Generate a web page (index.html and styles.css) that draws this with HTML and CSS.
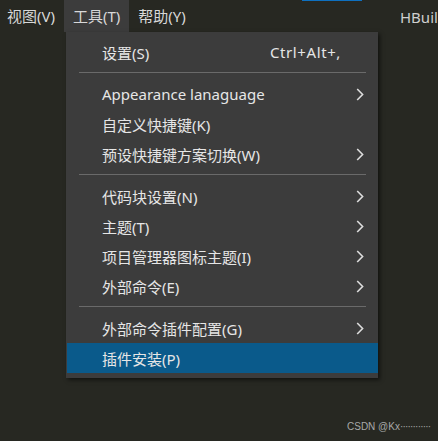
FILE: index.html
```html
<!DOCTYPE html>
<html lang="zh">
<head>
<meta charset="utf-8">
<link rel="stylesheet" href="styles.css">
</head>
<body>
<div class="screen">
  <div class="tabline"></div>
  <div class="menubar">
    <span class="mb-item">视图(V)</span>
    <span class="mb-item active">工具(T)</span>
    <span class="mb-item">帮助(Y)</span>
    <span class="title">HBuil</span>
  </div>
  <div class="menu">
    <div class="row"><span class="label">设置(S)</span><span class="key">Ctrl+Alt+,</span></div>
    <div class="sep"></div>
    <div class="row"><span class="label">Appearance lanaguage</span><svg class="arrow" viewBox="0 0 8 13"><path d="M1.2 1 L6.6 6.5 L1.2 12" /></svg></div>
    <div class="row"><span class="label">自定义快捷键(K)</span></div>
    <div class="row"><span class="label">预设快捷键方案切换(W)</span><svg class="arrow" viewBox="0 0 8 13"><path d="M1.2 1 L6.6 6.5 L1.2 12" /></svg></div>
    <div class="sep"></div>
    <div class="row"><span class="label">代码块设置(N)</span><svg class="arrow" viewBox="0 0 8 13"><path d="M1.2 1 L6.6 6.5 L1.2 12" /></svg></div>
    <div class="row"><span class="label">主题(T)</span><svg class="arrow" viewBox="0 0 8 13"><path d="M1.2 1 L6.6 6.5 L1.2 12" /></svg></div>
    <div class="row"><span class="label">项目管理器图标主题(I)</span><svg class="arrow" viewBox="0 0 8 13"><path d="M1.2 1 L6.6 6.5 L1.2 12" /></svg></div>
    <div class="row"><span class="label">外部命令(E)</span><svg class="arrow" viewBox="0 0 8 13"><path d="M1.2 1 L6.6 6.5 L1.2 12" /></svg></div>
    <div class="sep"></div>
    <div class="row"><span class="label">外部命令插件配置(G)</span><svg class="arrow" viewBox="0 0 8 13"><path d="M1.2 1 L6.6 6.5 L1.2 12" /></svg></div>
    <div class="row selected"><span class="label">插件安装(P)</span></div>
  </div>
  <div class="watermark">CSDN @Kx<span class="dots">············</span></div>
</div>
</body>
</html>
```

FILE: styles.css
```css
* { box-sizing: border-box; }
html, body { margin: 0; padding: 0; }
body {
  width: 438px;
  height: 441px;
  overflow: hidden;
  background: #272822;
  font-family: "Noto Sans", "Noto Sans CJK SC", sans-serif;
  color: #e2e2e2;
}
.screen {
  position: relative;
  width: 438px;
  height: 441px;
}
.tabline {
  position: absolute;
  left: 302px;
  top: 0;
  width: 60px;
  height: 1px;
  background: #0e70c0;
}
.menubar {
  display: flex;
  align-items: stretch;
  height: 32px;
  font-size: 15px;
}
.mb-item {
  display: flex;
  align-items: center;
  padding: 0 9px 2px;
  color: #d8d8d8;
  white-space: nowrap;
}
.mb-item:first-child { padding-left: 7px; padding-right: 9px; }
.mb-item.active {
  background: #3c3c3c;
}
.title {
  margin-left: auto;
  display: flex;
  align-items: center;
  padding-top: 1px;
  font-size: 15px;
  color: #cfcfcf;
  width: 38px;
  overflow: hidden;
  white-space: nowrap;
}
.menu {
  position: absolute;
  left: 66px;
  top: 32px;
  width: 312px;
  background: #3c3c3c;
  padding: 5px 0 5px 1px;
  box-shadow: 2px 2px 4px rgba(0, 0, 0, 0.55);
  font-size: 15px;
}
.row {
  display: flex;
  align-items: center;
  height: 30px;
  padding: 0 14px 0 35px;
  white-space: nowrap;
}
.row .label { flex: 1; color: #e6e6e6; }
.row .key { color: #e6e6e6; margin-right: 23px; letter-spacing: 0.6px; }
.row.selected { background: #0a5a8b; }
.arrow {
  width: 8px;
  height: 13px;
  fill: none;
  stroke: #dcdcdc;
  stroke-width: 1.6;
}
.sep {
  height: 1px;
  margin: 5px 12px 6px 12px;
  background: #6a6a6a;
}
.watermark {
  position: absolute;
  left: 347px;
  top: 421px;
  font-family: "Liberation Sans", sans-serif;
  font-size: 10px;
  color: #a8a8a8;
  white-space: nowrap;
}
.dots { letter-spacing: -0.8px; }
```
